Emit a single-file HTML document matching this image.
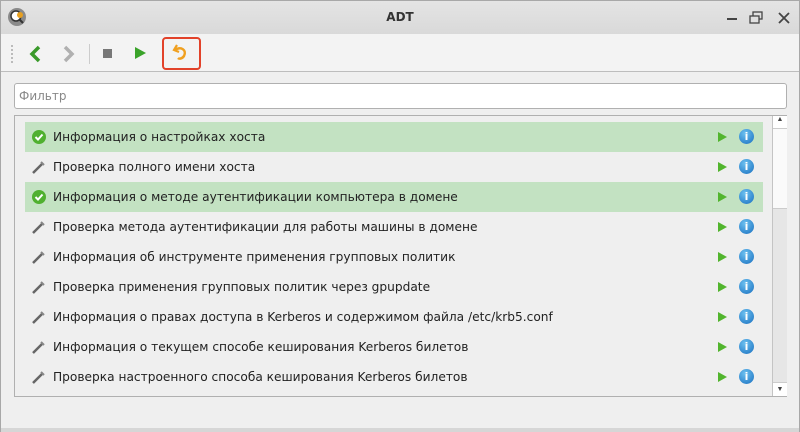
<!DOCTYPE html>
<html><head><meta charset="utf-8"><style>
*{margin:0;padding:0;box-sizing:border-box}
body{width:800px;height:432px;overflow:hidden;background:#efefef;font-family:"Liberation Sans","DejaVu Sans",sans-serif;position:relative;border:1px solid #a8a8a8}
.title{position:absolute;left:0;top:0;width:798px;height:33px;background:linear-gradient(#e4e4e4,#d9d9d9);text-align:center;font:bold 12px "DejaVu Sans",sans-serif;line-height:33px;color:#333}
.tb{position:absolute;left:0;top:33px;width:798px;height:38px;background:#f3f3f3;border-bottom:1px solid #bdbdbd}
.filter{position:absolute;left:13px;top:82px;width:773px;height:26px;background:#fff;border:1px solid #b0b0b0;border-radius:3px;font:12px "DejaVu Sans",sans-serif;color:#888;padding-left:4px;line-height:25px}
.list{position:absolute;left:13px;top:114px;width:773px;height:282px;border:1px solid #b0b0b0;background:#efefef}
.row{position:absolute;left:10px;width:738px;height:30px;font:12.2px "DejaVu Sans",sans-serif;color:#222;line-height:31px;padding-left:28px}
.row.g{background:#c3e2c2}
.ic{position:absolute;left:6px;top:7px}
.pl{position:absolute;left:693px;top:10px;width:0;height:0;border-left:9px solid #52b52e;border-top:5px solid transparent;border-bottom:5px solid transparent}
.inf{position:absolute;left:714px;top:7px;width:15px;height:15px;border-radius:50%;background:radial-gradient(circle at 40% 30%,#6cc0f0,#1a70c0);color:#fff;font:bold 11px "DejaVu Sans";line-height:15px;text-align:center}
.sb{position:absolute;left:757px;top:0;width:15px;height:280px;background:#e6e6e6;border-left:1px solid #c4c4c4}
</style></head><body>
<div class="title">ADT</div>
<svg style="position:absolute;left:6px;top:6px" width="20" height="20"><circle cx="10" cy="10" r="9" fill="#8a8a8a"/><circle cx="9" cy="9" r="5" fill="#fff" stroke="#333" stroke-width="1.5"/><path d="M12 12l4 4" stroke="#333" stroke-width="2"/><circle cx="13" cy="8" r="3" fill="#e8a020"/></svg>
<div style="position:absolute;left:726px;top:17px;width:10px;height:2px;background:#444"></div>
<svg style="position:absolute;left:748px;top:10px" width="14" height="14"><rect x="4" y="1" width="9" height="7" fill="none" stroke="#444" stroke-width="1.3"/><rect x="1" y="5" width="9" height="7" fill="#e0e0e0" stroke="#444" stroke-width="1.3"/></svg>
<svg style="position:absolute;left:777px;top:11px" width="12" height="12"><path d="M1 1L11 11M11 1L1 11" stroke="#444" stroke-width="1.8"/></svg>
<div class="tb"></div>
<div style="position:absolute;left:10px;top:44px;width:2px;height:18px;border-left:2px dotted #bbb"></div>
<svg style="position:absolute;left:27px;top:44px" width="16" height="18"><path d="M11 2L4 9L11 16" fill="none" stroke="#3a9a2a" stroke-width="3.5"/></svg>
<svg style="position:absolute;left:59px;top:44px" width="16" height="18"><path d="M5 2L12 9L5 16" fill="none" stroke="#b0b0b0" stroke-width="3.5"/></svg>
<div style="position:absolute;left:88px;top:43px;width:1px;height:20px;background:#ccc"></div>
<div style="position:absolute;left:102px;top:48px;width:9px;height:9px;background:#777"></div>
<div style="position:absolute;left:134px;top:46px;width:0;height:0;border-left:11px solid #3aa32a;border-top:6px solid transparent;border-bottom:6px solid transparent"></div>
<div style="position:absolute;left:161px;top:36px;width:39px;height:33px;border:2px solid #e2422a;border-radius:4px"></div>
<svg style="position:absolute;left:170px;top:41px" width="20" height="22"><path d="M6 3L3 8L8 10" fill="none" stroke="#f0a020" stroke-width="2.2"/><path d="M4 8C10 4 16 8 13 14C11 17 8 17 7 16" fill="none" stroke="#f0a020" stroke-width="2.5"/></svg>
<div class="filter">Фильтр</div>
<div class="list">
<div class="sb"><div style="height:13px;background:#fff;font-size:7px;text-align:center;color:#444;border-bottom:1px solid #ccc">▲</div><div style="height:80px;background:#fafafa;border-bottom:1px solid #ccc"></div><div style="position:absolute;bottom:0;width:14px;height:14px;background:#fff;font-size:7px;text-align:center;color:#444;border-top:1px solid #ccc;line-height:14px">▼</div></div>
<div class="row g" style="top:6px"><svg class="ic" width="16" height="16"><circle cx="8" cy="8" r="7" fill="#50b030"/><path d="M4.5 8l2.5 2.5L11.5 5.5" fill="none" stroke="#fff" stroke-width="2"/></svg>Информация о настройках хоста<div class="pl"></div><div class="inf">i</div></div>
<div class="row" style="top:36px"><svg class="ic" width="16" height="16"><path d="M2 14L11 5" stroke="#666" stroke-width="2.5"/><path d="M10 3l3 3" stroke="#888" stroke-width="2"/></svg>Проверка полного имени хоста<div class="pl"></div><div class="inf">i</div></div>
<div class="row g" style="top:66px"><svg class="ic" width="16" height="16"><circle cx="8" cy="8" r="7" fill="#50b030"/><path d="M4.5 8l2.5 2.5L11.5 5.5" fill="none" stroke="#fff" stroke-width="2"/></svg>Информация о методе аутентификации компьютера в домене<div class="pl"></div><div class="inf">i</div></div>
<div class="row" style="top:96px"><svg class="ic" width="16" height="16"><path d="M2 14L11 5" stroke="#666" stroke-width="2.5"/><path d="M10 3l3 3" stroke="#888" stroke-width="2"/></svg>Проверка метода аутентификации для работы машины в домене<div class="pl"></div><div class="inf">i</div></div>
<div class="row" style="top:126px"><svg class="ic" width="16" height="16"><path d="M2 14L11 5" stroke="#666" stroke-width="2.5"/><path d="M10 3l3 3" stroke="#888" stroke-width="2"/></svg>Информация об инструменте применения групповых политик<div class="pl"></div><div class="inf">i</div></div>
<div class="row" style="top:156px"><svg class="ic" width="16" height="16"><path d="M2 14L11 5" stroke="#666" stroke-width="2.5"/><path d="M10 3l3 3" stroke="#888" stroke-width="2"/></svg>Проверка применения групповых политик через gpupdate<div class="pl"></div><div class="inf">i</div></div>
<div class="row" style="top:186px"><svg class="ic" width="16" height="16"><path d="M2 14L11 5" stroke="#666" stroke-width="2.5"/><path d="M10 3l3 3" stroke="#888" stroke-width="2"/></svg>Информация о правах доступа в Kerberos и содержимом файла /etc/krb5.conf<div class="pl"></div><div class="inf">i</div></div>
<div class="row" style="top:216px"><svg class="ic" width="16" height="16"><path d="M2 14L11 5" stroke="#666" stroke-width="2.5"/><path d="M10 3l3 3" stroke="#888" stroke-width="2"/></svg>Информация о текущем способе кеширования Kerberos билетов<div class="pl"></div><div class="inf">i</div></div>
<div class="row" style="top:246px"><svg class="ic" width="16" height="16"><path d="M2 14L11 5" stroke="#666" stroke-width="2.5"/><path d="M10 3l3 3" stroke="#888" stroke-width="2"/></svg>Проверка настроенного способа кеширования Kerberos билетов<div class="pl"></div><div class="inf">i</div></div>
</div>
<div style="position:absolute;left:0;top:427px;width:798px;height:4px;background:#d6d6d6"></div>
</body></html>
